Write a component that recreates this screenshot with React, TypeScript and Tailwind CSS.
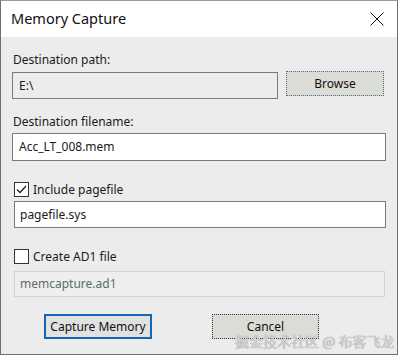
import { useState } from 'react'

const font = { fontFamily: '"Noto Sans", "Open Sans", sans-serif' }

function CheckBox({ checked, onToggle, label }: { checked: boolean; onToggle: () => void; label: string }) {
  return (
    <label className="flex items-center h-[17px] cursor-default" onClick={onToggle}>
      <span className="w-[15px] h-[15px] border border-[#333333] bg-white flex items-center justify-center">
        {checked && (
          <svg width="11" height="9" viewBox="0 0 11 9" fill="none">
            <path d="M1 4.5L4 7.5L10 1" stroke="#222" strokeWidth="1.3" />
          </svg>
        )}
      </span>
      <span className="ml-[4px] text-[12px] text-[#1a1a1a] leading-none">{label}</span>
    </label>
  )
}

export default function App() {
  const [pagefile, setPagefile] = useState(true)
  const [ad1, setAd1] = useState(false)

  return (
    <div
      className="relative w-[398px] h-[355px] border border-[#707070] border-t-[#9a9a9a] flex flex-col bg-[#ececec] overflow-hidden"
      style={font}
    >
      {/* Title bar */}
      <div className="h-[36px] bg-white flex items-center justify-between pl-[10px] pr-[13px] shrink-0">
        <span className="text-[14.5px] text-[#111]">Memory Capture</span>
        <svg width="14" height="14" viewBox="0 0 14 14">
          <path d="M0.5 0.5L13.5 13.5M13.5 0.5L0.5 13.5" stroke="#111" strokeWidth="1" />
        </svg>
      </div>

      {/* Body */}
      <div className="flex flex-col px-[11px] pt-[15px] text-[12px] text-[#1a1a1a]">
        <div className="leading-[16px] pl-[1px]">Destination path:</div>
        <div className="flex items-start mt-[4px]">
          <div className="w-[266px] h-[27px] border border-[#7a7a7a] bg-[#ececec] flex items-center pl-[6px]">E:\</div>
          <button className="ml-[8px] mt-[-1px] w-[98px] h-[25px] border border-dotted border-[#4a6a8a] bg-[#dcdcd6] text-[#111]">
            Browse
          </button>
        </div>

        <div className="leading-[16px] mt-[15px] pl-[1px]">Destination filename:</div>
        <div className="mt-[3px] h-[28px] border border-[#7a7a7a] bg-white flex items-center pl-[6px]">Acc_LT_008.mem</div>

        <div className="mt-[20px] pl-[2px]">
          <CheckBox checked={pagefile} onToggle={() => setPagefile(!pagefile)} label="Include pagefile" />
        </div>
        <div className="mt-[3px] ml-[2px] h-[27px] border border-[#7a7a7a] bg-white flex items-center pl-[5px]">pagefile.sys</div>

        <div className="mt-[20px] pl-[2px]">
          <CheckBox checked={ad1} onToggle={() => setAd1(!ad1)} label="Create AD1 file" />
        </div>
        <div className="mt-[6px] ml-[2px] mr-[1px] h-[26px] border border-[#d2d2d2] bg-[#eeeeee] flex items-center pl-[5px] text-[#5a6b6b]">
          memcapture.ad1
        </div>

        <div className="flex mt-[17px]">
          <button className="ml-[32px] w-[108px] h-[25px] border-2 border-[#1565b0] bg-[#e1e1e1] text-[#111]">
            Capture Memory
          </button>
          <button className="ml-[60px] w-[107px] h-[25px] border border-dotted border-[#333] bg-[#dcdcd6] text-[#111]">
            Cancel
          </button>
        </div>
      </div>

      {/* watermark */}
      <div
        className="absolute left-[234px] top-[330px] text-[14px] text-[#d0d0d0] whitespace-nowrap"
        style={{ fontFamily: '"Noto Sans CJK SC", sans-serif', textShadow: '0 0 1px #8a8a8a' }}
      >
        掘金技术社区 @ 布客飞龙
      </div>
    </div>
  )
}
